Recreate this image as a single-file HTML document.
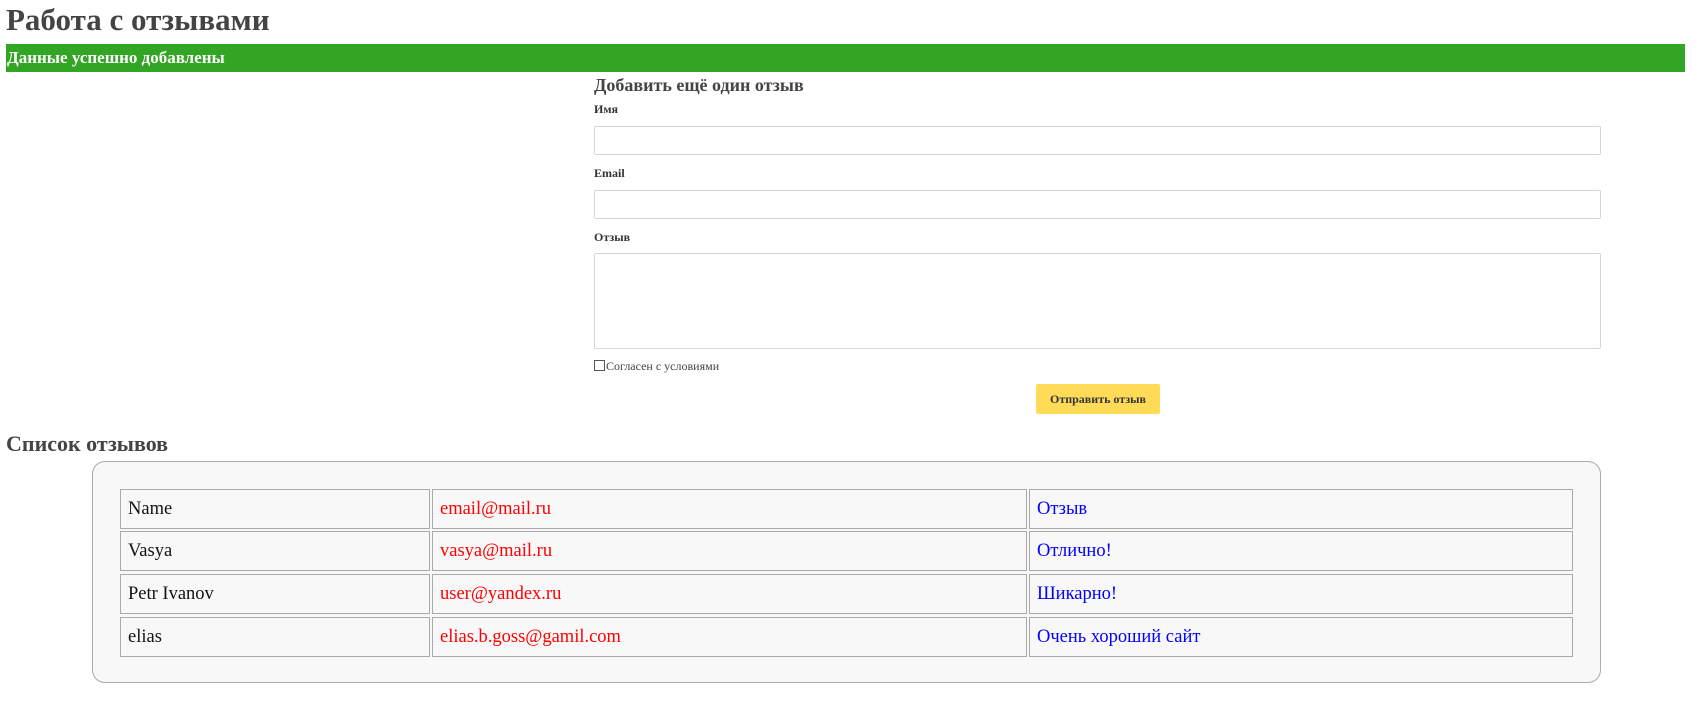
<!DOCTYPE html>
<html><head><meta charset="utf-8"><style>
*{box-sizing:border-box;margin:0;padding:0}
body{width:1707px;height:704px;background:#fff;font-family:"Liberation Serif","Noto Serif CJK SC",serif;color:#444;position:relative;overflow:hidden}
.a{position:absolute;white-space:nowrap}
h1{position:absolute;left:6px;top:2px;font-size:31px;font-weight:bold;color:#444}
.bar{position:absolute;left:6px;top:44px;width:1679px;height:28px;background:#33a524;color:#fff;font-weight:bold;font-size:17px;line-height:28px;padding-left:1px}
.lbl{font-size:12px;font-weight:bold;color:#333}
.inp{position:absolute;left:594px;width:1007px;border:1px solid #d6d6d6;border-radius:2px;background:#fff}
.btn{position:absolute;left:1036px;top:384px;width:124px;height:30px;background:#ffdb58;border-radius:2px;font-size:12px;font-weight:bold;color:#333;text-align:center;line-height:30px}
.box{position:absolute;left:92px;top:461px;width:1509px;height:222px;border:1px solid #aaa;border-radius:13px;background:#f8f8f8}
.c{position:absolute;border:1px solid #aaa;font-size:18.5px;line-height:38px;padding-left:7px;color:#111}
.r{color:#f00}.b{color:#00f}
</style></head><body>
<h1>Работа с отзывами</h1>
<div class="bar">Данные успешно добавлены</div>
<div class="a" style="left:594px;top:75px;font-size:18px;font-weight:bold;color:#444">Добавить ещё один отзыв</div>
<div class="a lbl" style="left:594px;top:102px">Имя</div>
<div class="inp" style="top:126px;height:29px"></div>
<div class="a lbl" style="left:594px;top:166px">Email</div>
<div class="inp" style="top:190px;height:29px"></div>
<div class="a lbl" style="left:594px;top:230px">Отзыв</div>
<div class="inp" style="top:253px;height:96px"></div>
<div class="a" style="left:594px;top:359px;font-size:12px;color:#444;line-height:14px"><span style="display:inline-block;width:11px;height:11px;border:1px solid #555;vertical-align:-1px;margin-right:1px"></span>Согласен с условиями</div>
<div class="btn">Отправить отзыв</div>
<div class="a" style="left:6px;top:431px;font-size:22px;font-weight:bold;color:#444">Список отзывов</div>
<div class="box"></div>
<div class="c" style="left:120px;top:489px;width:310px;height:40px">Name</div>
<div class="c r" style="left:432px;top:489px;width:595px;height:40px">email@mail.ru</div>
<div class="c b" style="left:1029px;top:489px;width:544px;height:40px">Отзыв</div>
<div class="c" style="left:120px;top:531px;width:310px;height:40px">Vasya</div>
<div class="c r" style="left:432px;top:531px;width:595px;height:40px">vasya@mail.ru</div>
<div class="c b" style="left:1029px;top:531px;width:544px;height:40px">Отлично!</div>
<div class="c" style="left:120px;top:574px;width:310px;height:40px">Petr Ivanov</div>
<div class="c r" style="left:432px;top:574px;width:595px;height:40px">user@yandex.ru</div>
<div class="c b" style="left:1029px;top:574px;width:544px;height:40px">Шикарно!</div>
<div class="c" style="left:120px;top:617px;width:310px;height:40px">elias</div>
<div class="c r" style="left:432px;top:617px;width:595px;height:40px">elias.b.goss@gamil.com</div>
<div class="c b" style="left:1029px;top:617px;width:544px;height:40px">Очень хороший сайт</div>
</body></html>
